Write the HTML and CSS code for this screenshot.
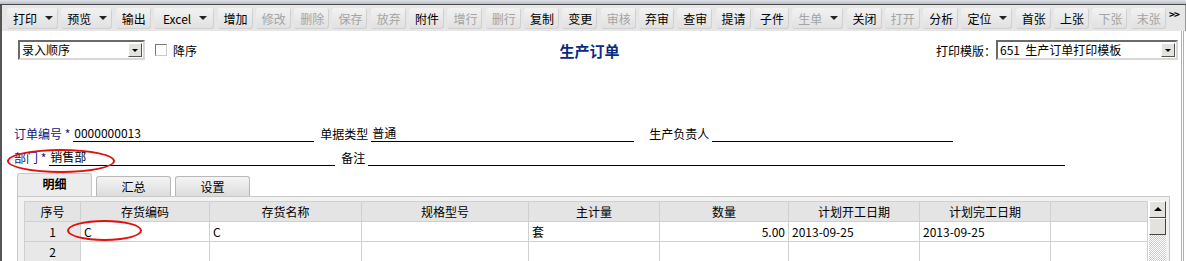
FILE: index.html
```html
<!DOCTYPE html>
<html lang="zh-CN">
<head>
    <meta charset="UTF-8">
    <title>生产订单</title>
    <link rel="stylesheet" href="styles.css">
</head>
<body>
    <div class="topline"></div>
    <div class="toolbar">
        <span class="btn">打印<i class="caret"></i></span>
        <span class="btn">预览<i class="caret"></i></span>
        <span class="btn">输出</span>
        <span class="btn wide">Excel<i class="caret"></i></span>
        <span class="btn">增加</span>
        <span class="btn off">修改</span>
        <span class="btn off">删除</span>
        <span class="btn off">保存</span>
        <span class="btn off">放弃</span>
        <span class="btn">附件</span>
        <span class="btn off">增行</span>
        <span class="btn off">删行</span>
        <span class="btn">复制</span>
        <span class="btn">变更</span>
        <span class="btn off">审核</span>
        <span class="btn">弃审</span>
        <span class="btn">查审</span>
        <span class="btn">提请</span>
        <span class="btn">子件</span>
        <span class="btn off">生单<i class="caret"></i></span>
        <span class="btn">关闭</span>
        <span class="btn off">打开</span>
        <span class="btn">分析</span>
        <span class="btn">定位<i class="caret"></i></span>
        <span class="btn">首张</span>
        <span class="btn">上张</span>
        <span class="btn off">下张</span>
        <span class="btn off">末张</span>
        <span class="more">&gt;&gt;</span>
    </div>

    <div class="page">
        <div class="head">
            <div class="left">
                <div class="combo sort">
                    <span class="combo-text">录入顺序</span>
                    <span class="drop"></span>
                </div>
                <span class="check"></span>
                <span>降序</span>
            </div>
            <div class="title">生产订单</div>
            <div class="right">
                <span>打印模版：</span>
                <div class="combo tpl">
                    <span class="combo-text">651&nbsp; 生产订单打印模板</span>
                    <span class="drop"></span>
                </div>
            </div>
        </div>

        <div class="form">
            <div class="row">
                <span class="label req">订单编号 *</span>
                <span class="line w1">0000000013</span>
                <span class="label">单据类型</span>
                <span class="line w2">普通</span>
                <span class="label gap">生产负责人</span>
                <span class="line w3"></span>
            </div>
            <div class="row">
                <span class="label req">部门 *</span>
                <span class="line w4">销售部</span>
                <span class="label">备注</span>
                <span class="line w5"></span>
            </div>
            <span class="ring ring-dept"></span>
        </div>

        <div class="tabs">
            <span class="tab active">明细</span>
            <span class="tab">汇总</span>
            <span class="tab">设置</span>
        </div>

        <div class="panel">
            <div class="grid">
                <table>
                    <colgroup>
                        <col class="c-no">
                        <col class="c-code">
                        <col class="c-name">
                        <col class="c-spec">
                        <col class="c-unit">
                        <col class="c-qty">
                        <col class="c-date">
                        <col class="c-date">
                        <col>
                    </colgroup>
                    <tr class="hdr">
                        <th>序号</th>
                        <th>存货编码</th>
                        <th>存货名称</th>
                        <th>规格型号</th>
                        <th>主计量</th>
                        <th>数量</th>
                        <th>计划开工日期</th>
                        <th>计划完工日期</th>
                        <th></th>
                    </tr>
                    <tr>
                        <td class="no">1</td>
                        <td>C</td>
                        <td>C</td>
                        <td></td>
                        <td>套</td>
                        <td class="num">5.00</td>
                        <td>2013-09-25</td>
                        <td>2013-09-25</td>
                        <td></td>
                    </tr>
                    <tr>
                        <td class="no">2</td>
                        <td></td>
                        <td></td>
                        <td></td>
                        <td></td>
                        <td></td>
                        <td></td>
                        <td></td>
                        <td></td>
                    </tr>
                </table>
                <div class="vscroll">
                    <span class="up"></span>
                    <span class="thumb"></span>
                    <span class="track"></span>
                </div>
            </div>
            <span class="ring ring-code"></span>
        </div>
    </div>
</body>
</html>
```

FILE: styles.css
```css
body {
    margin: 0;
    font-family: "Noto Sans CJK SC", "DejaVu Sans", sans-serif;
    font-size: 12px;
    color: #000;
    background: #fff;
    width: 1186px;
    height: 261px;
    overflow: hidden;
}

.topline {
    height: 4px;
    background: linear-gradient(#e0e4ea, #b8bcc4);
    border-bottom: 1px solid #4a4a4a;
}

.toolbar {
    display: flex;
    align-items: center;
    gap: 3.3px;
    height: 26px;
    padding: 0 0 0 5px;
    background: #e6e6e6;
    border-left: 2px solid #555;
    border-right: 1px solid #999;
}

.btn {
    display: flex;
    align-items: center;
    height: 21px;
    padding: 0 5px 0 6px;
    line-height: 21px;
    background: linear-gradient(#f2f2f2, #e0e0e0);
    border-radius: 3px;
    box-shadow: inset -1px -1px 0 #d0d0d0;
    white-space: nowrap;
}

.btn.wide {
    padding: 0 7px 0 9px;
}

.btn.off {
    color: #a4a4a4;
}

.caret {
    width: 0;
    height: 0;
    margin-left: 8px;
    border-left: 4px solid transparent;
    border-right: 4px solid transparent;
    border-top: 4px solid #222;
}

.more {
    font-size: 10px;
    font-weight: bold;
    margin: -10px 0 0 0;
    letter-spacing: -1px;
}

.page {
    position: relative;
    border-left: 2px solid #555;
    height: 230px;
    margin-right: 2px;
    border-right: 3px double #b0b0b0;
}

.head {
    display: flex;
    justify-content: space-between;
    align-items: center;
    padding: 9px 3px 0 16px;
    height: 20px;
}

.left, .right {
    display: flex;
    align-items: center;
    width: 300px;
}

.right {
    justify-content: flex-end;
    width: 245px;
}

.title {
    font-size: 15px;
    font-weight: bold;
    color: #0c2a7e;
    margin-left: -72px;
}

.combo {
    display: flex;
    align-items: center;
    height: 16px;
    border: 2px solid;
    border-color: #6a6a6a #d8d8d8 #d8d8d8 #6a6a6a;
    background: #fff;
    line-height: 16px;
}

.combo-text {
    flex: 1;
    padding-left: 2px;
    white-space: nowrap;
}

.combo.sort {
    width: 123px;
}

.combo.tpl {
    width: 178px;
}

.drop {
    position: relative;
    width: 14px;
    height: 14px;
    margin: 1px;
    background: #e4e2dc;
    border: 1px solid;
    border-color: #fff #555 #555 #fff;
    box-sizing: border-box;
}

.drop::after {
    content: "";
    position: absolute;
    left: 3px;
    top: 5px;
    border-left: 3px solid transparent;
    border-right: 3px solid transparent;
    border-top: 3px solid #000;
}

.check {
    width: 10px;
    height: 10px;
    margin: 0 6px 0 10px;
    border: 1px solid;
    border-color: #777 #ccc #ccc #777;
}

.form {
    position: relative;
    padding: 58px 0 0 12px;
}

.row {
    display: flex;
    align-items: flex-end;
    height: 24px;
}

.label {
    white-space: nowrap;
    line-height: 16px;
    margin-right: 3px;
    margin-left: 6px;
}

.label.req {
    color: #14147a;
    margin-left: 0;
}

.label.gap {
    margin-left: 15px;
}

.line {
    display: block;
    height: 16px;
    line-height: 16px;
    padding-left: 1px;
    border-bottom: 1px solid #000;
}

.w1 { width: 240px; }
.w2 { width: 262px; }
.w3 { width: 240px; }
.w4 { width: 285px; }
.w5 { width: 696px; }

.ring {
    position: absolute;
    border: 2px solid #e01010;
    border-radius: 50%;
}

.ring-dept {
    left: 5px;
    top: 89px;
    width: 104px;
    height: 20px;
}

.tabs {
    display: flex;
    align-items: flex-end;
    gap: 4px;
    margin: 8px 0 0 15px;
    height: 22px;
}

.tab {
    width: 73px;
    height: 19px;
    line-height: 20px;
    text-align: center;
    background: linear-gradient(#f4f4f4, #dcdcdc);
    border: 1px solid #b8b8b8;
    border-bottom: none;
    border-radius: 3px 3px 0 0;
}

.tab.active {
    height: 22px;
    line-height: 20px;
    font-weight: bold;
    background: #ececec;
    border-color: #c8c8c8;
}

.panel {
    position: relative;
    margin: 0 11px 0 15px;
    padding: 4px 3px 0 6px;
    height: 60px;
    background: #f2f2f2;
    border: 1px solid #c8c8c8;
    border-bottom: none;
}

.grid {
    display: flex;
    background: #fff;
}

table {
    border-collapse: collapse;
    table-layout: fixed;
    width: 1127px;
}

.c-no { width: 56px; }
.c-code { width: 129px; }
.c-name { width: 152px; }
.c-spec { width: 167px; }
.c-unit { width: 131px; }
.c-qty { width: 129px; }
.c-date { width: 131px; }

th, td {
    height: 19px;
    padding: 0 3px;
    border: 1px solid #d0d0d0;
    font-weight: normal;
    white-space: nowrap;
    text-align: left;
    line-height: 18px;
}

.hdr th {
    background: #e4e4e4;
    text-align: center;
}

td.no {
    background: #e8e8e8;
    text-align: center;
}

td.num {
    text-align: right;
}

.vscroll {
    display: flex;
    flex-direction: column;
    width: 17px;
    margin-left: 1px;
}

.up, .thumb {
    position: relative;
    height: 17px;
    background: #e4e2dc;
    border: 1px solid;
    border-color: #fff #444 #444 #fff;
    box-sizing: border-box;
}

.up::after {
    content: "";
    position: absolute;
    left: 4px;
    top: 5px;
    border-left: 4px solid transparent;
    border-right: 4px solid transparent;
    border-bottom: 4px solid #000;
}

.track {
    flex: 1;
    background: repeating-conic-gradient(#ccc 0 25%, #fff 0 50%) 0 0 / 2px 2px;
}

.ring-code {
    left: 49px;
    top: 23px;
    width: 71px;
    height: 17px;
}
```
